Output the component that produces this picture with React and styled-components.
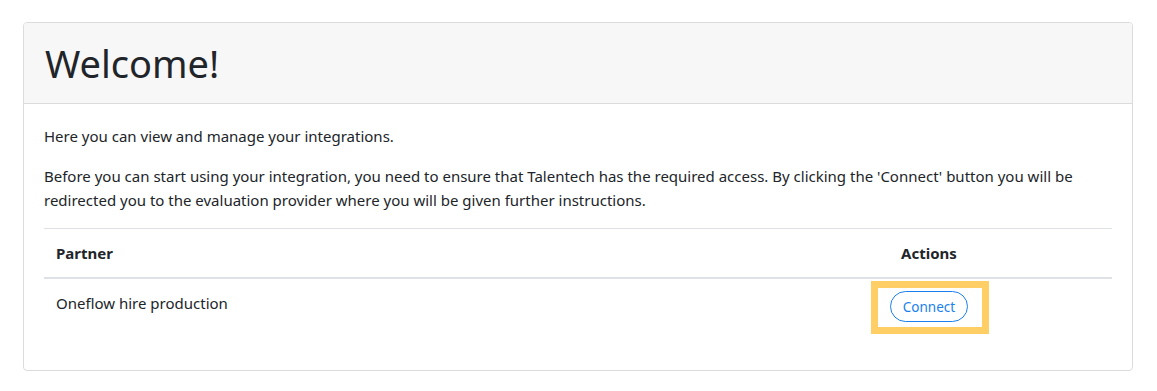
import styled, { createGlobalStyle } from 'styled-components';

const GlobalStyle = createGlobalStyle`
  body {
    margin: 0;
    background: #fff;
    color: #212529;
    font-family: "Noto Sans", "Open Sans", sans-serif;
    font-size: 15px;
    line-height: 24px;
  }
`;

const App = () => {
  return (
    <>
      <GlobalStyle />
      <Page>
        <Card>
          <CardHeader>
            <Title>Welcome!</Title>
          </CardHeader>
          <CardBody>
            <Text>Here you can view and manage your integrations.</Text>
            <Text>
              Before you can start using your integration, you need to ensure that Talentech has the
              required access. By clicking the 'Connect' button you will be redirected you to the
              evaluation provider where you will be given further instructions.
            </Text>
            <Table>
              <thead>
                <tr>
                  <HeadCell>Partner</HeadCell>
                  <HeadCell $center>Actions</HeadCell>
                </tr>
              </thead>
              <tbody>
                <tr>
                  <Cell>Oneflow hire production</Cell>
                  <Cell $center>
                    <Highlight>
                      <ConnectButton type="button">Connect</ConnectButton>
                    </Highlight>
                  </Cell>
                </tr>
              </tbody>
            </Table>
          </CardBody>
        </Card>
      </Page>
    </>
  );
};

export default App;

const Page = styled.div`
  padding: 22px 24px 20px 23px;
`;

const Card = styled.div`
  border: 1px solid #dcdcdc;
  border-radius: 4px;
  overflow: hidden;
  background: #fff;
`;

const CardHeader = styled.div`
  background: #f7f7f7;
  border-bottom: 1px solid #dcdcdc;
  padding: 16px 21px;
`;

const Title = styled.h1`
  margin: 0;
  font-size: 38px;
  font-weight: 400;
  line-height: 48px;
  color: #212529;
`;

const CardBody = styled.div`
  padding: 20px;
`;

const Text = styled.p`
  margin: 0 0 16px;
`;

const Table = styled.table`
  width: 100%;
  border-collapse: collapse;
  margin-bottom: 16px;
`;

const HeadCell = styled.th`
  padding: 12px;
  text-align: ${p => (p.$center ? 'center' : 'left')};
  width: ${p => (p.$center ? '342px' : 'auto')};
  font-weight: 700;
  border-top: 1px solid #dee2e6;
  border-bottom: 2px solid #dee2e6;
`;

const Cell = styled.td`
  padding: 12px;
  text-align: ${p => (p.$center ? 'center' : 'left')};
  vertical-align: top;
`;

const Highlight = styled.span`
  position: relative;
  display: inline-block;
  &::after {
    content: '';
    position: absolute;
    left: -19px;
    right: -21px;
    top: -10px;
    bottom: -12px;
    border: 7px solid #ffcf66;
    pointer-events: none;
  }
`;

const ConnectButton = styled.button`
  display: block;
  height: 31px;
  padding: 0 12px;
  border: 1px solid #1a7ff0;
  border-radius: 16px;
  background: #fff;
  color: #1a7ff0;
  font-family: inherit;
  font-size: 13.5px;
  cursor: pointer;
`;
